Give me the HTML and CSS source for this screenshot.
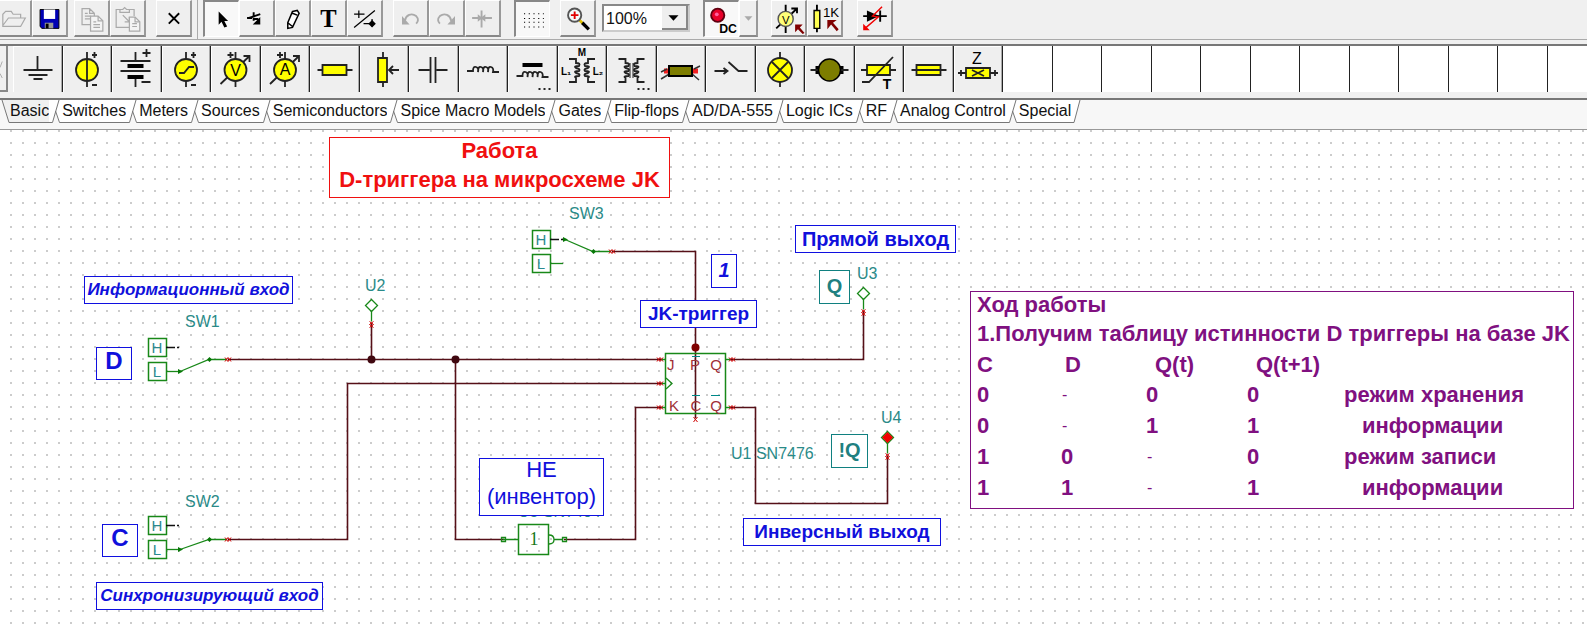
FILE: index.html
```
<!DOCTYPE html>
<html lang="ru">
<head>
<meta charset="utf-8">
<title>D-триггер на микросхеме JK</title>
<link rel="stylesheet" href="styles.css">
</head>
<body>
<header class="toolbar">
  <div class="group file">
    <button class="tool tool-cut" aria-label="Open"><svg viewBox="0 0 32 36"><path class="off" d="M3 26V14l3-3h6l2 3h8v4M3 26l6-8h18l-5 9H3z"/></svg></button>
    <button class="tool" aria-label="Save"><svg viewBox="0 0 34 36"><path fill="#0000b4" stroke="#000" d="M7 9h20v20H9l-2-2z"/><path fill="#fff" d="M11 9h12v10H11z"/><path fill="#999" d="M12 23h9v6h-9z"/><path fill="#000" d="M13 24h3v5h-3z"/></svg></button>
  </div>
  <div class="group">
    <button class="tool" aria-label="Copy"><svg viewBox="0 0 34 36"><path class="off" d="M7 8h8l5 5v12H7zM15 8v5h5M10 13h3M10 16h6M10 19h6"/><path class="off paper" d="M16 16h8l5 5v11H16z"/><path class="off" d="M24 16v5h5M19 22h3M19 25h7M19 28h7"/></svg></button>
    <button class="tool" aria-label="Paste"><svg viewBox="0 0 34 36"><path class="off" d="M9 9H5v19h14M19 9h5v7M9 12V9h3l2-2 2 2h3v3zM12 15l7 7M19 17v5h-5" /><path class="off paper" d="M19 17h6l5 5v10H19z"/><path class="off" d="M25 17v5h5M22 24h5M22 27h5"/></svg></button>
  </div>
  <div class="group">
    <button class="tool" aria-label="Delete"><svg viewBox="0 0 34 36"><path fill="none" stroke="#000" stroke-width="2" d="M12 13l11 11M23 13L12 24"/></svg></button>
  </div>
  <div class="divider"></div>
  <div class="group">
    <button class="tool pressed" aria-label="Select"><svg viewBox="0 0 34 36"><path fill="#000" d="M14 10v14l3-3 3 6 3-1-3-6h4z"/></svg></button>
    <button class="tool" aria-label="Wire node"><svg viewBox="0 0 34 36"><path fill="none" stroke="#000" stroke-width="2" d="M7 18h6M14 12v9M9 18l12-4M13 19h6M19 19v5"/><path d="M21 17v8h-8z"/></svg></button>
    <button class="tool" aria-label="Wire"><svg viewBox="0 0 34 36"><path fill="#fff" stroke="#000" stroke-width="1.6" d="M17 11l5-1 2 3-7 15-5 1 0-6zM12 23l5 4M17 13l5 2"/></svg></button>
    <button class="tool" aria-label="Text"><svg viewBox="0 0 34 36"><text class="glyph serif" x="17" y="27">T</text></svg></button>
    <button class="tool" aria-label="Components"><svg viewBox="0 0 34 36"><path fill="none" stroke="#000" stroke-width="1.3" d="M6 14h11M11 10v8M6 28L28 10M16 24h12M25 19v8"/><path d="M25 20l4 4-4 4-4-4z"/></svg></button>
  </div>
  <div class="group">
    <button class="tool" aria-label="Undo"><svg viewBox="0 0 34 36"><path class="off thick" d="M11 21c1-6 7-9 12-5 3 3 2 6 0 8"/><path fill="#aaa" d="M8 16v9h8z"/></svg></button>
    <button class="tool" aria-label="Redo"><svg viewBox="0 0 34 36"><path class="off thick" d="M22 21c-1-6-7-9-12-5-3 3-2 6 0 8"/><path fill="#aaa" d="M26 16v9h-8z"/></svg></button>
    <button class="tool" aria-label="Rotate"><svg viewBox="0 0 34 36"><path class="off thick" d="M6 18h21M16 10v18"/><path fill="#aaa" d="M12 14l5 4-5 4zM20 14l-5 4 5 4z"/></svg></button>
  </div>
  <div class="group wide">
    <button class="tool pressed" aria-label="Grid"><svg viewBox="0 0 34 36"><path fill="none" stroke="#000" stroke-width="1.2" stroke-dasharray="1.2 3.8" d="M8 12.500h21M8 17.500h21M8 21.500h21M8 26.500h21"/></svg></button>
  </div>
  <div class="group">
    <button class="tool" aria-label="Zoom"><svg viewBox="0 0 34 36"><path stroke="#e0c000" stroke-width="3" d="M19 20l4 4"/><path stroke="#000" stroke-width="3.500" d="M22 23l7 7"/><circle cx="14" cy="15" r="7" fill="#f4fafa" stroke="#555" stroke-width="2"/><path stroke="#e00000" stroke-width="2" d="M10 15h8M14 11v8"/></svg></button>
  </div>
  <label class="combo" aria-label="Zoom level">
    <select><option>100%</option></select>
    <span class="drop"><svg viewBox="0 0 24 24"><path d="M7 10h11l-5.500 6z"/></svg></span>
  </label>
  <div class="group wide">
    <button class="tool pressed" aria-label="DC mode"><svg viewBox="0 0 34 36"><circle cx="13" cy="14" r="7" fill="#e8002a" stroke="#600010" stroke-width="2"/><circle cx="12" cy="13" r="2" fill="#ff60a0"/><text class="glyph narrow" x="24" y="33">DC</text></svg></button>
    <button class="tool slim" aria-label="Mode list"><svg viewBox="0 0 18 36"><path fill="#aaa" d="M5 16h9l-4.500 5z"/></svg></button>
  </div>
  <div class="group wide">
    <button class="tool" aria-label="Voltage pin"><svg viewBox="0 0 34 36"><path fill="none" stroke="#000" stroke-width="2" d="M14 4v30M4 29L26 8M26 13V8h-6"/><circle cx="14" cy="19" r="8" fill="#ffff78" stroke="#555" stroke-width="1.500"/><text class="glyph tiny" x="14" y="24">V</text><path fill="#800000" d="M24 25h8l-3 3 5 6-2 1-5-5-3 3z"/></svg></button>
    <button class="tool" aria-label="Resistor value"><svg viewBox="0 0 34 36"><path stroke="#000" stroke-width="2" d="M9 4v29"/><path fill="#ffff50" stroke="#000" stroke-width="1.500" d="M6 10h6v19H6z"/><text class="glyph" x="24" y="17">1K</text><path fill="#800000" d="M20 20h10l-4 3 6 7-2 2-6-7-4 5z"/></svg></button>
  </div>
  <div class="group wider">
    <button class="tool" aria-label="Fault"><svg viewBox="0 0 34 36"><path stroke="#000" stroke-width="2" d="M5 16h25M23 10v12"/><path fill="#000" d="M9 10l13 6-13 6z"/><path fill="none" stroke="#f00000" stroke-width="1.500" d="M25 6l-10 10 6 1L7 29"/><path fill="#f00000" d="M5 24v7h7z"/></svg></button>
  </div>
</header>

<nav class="palette" aria-label="Components">
  <button class="scroller" aria-label="Scroll left"><svg viewBox="0 0 8 46"><path fill="none" stroke="#999" d="M0 22l3-8M0 30l3 6"/></svg></button>
  <button class="cell part" aria-label="Ground"><svg viewBox="0 0 48 46"><path class="ln" d="M24 10v14M10 24h29M15 29h19M20 33h9"/></svg></button>
  <button class="cell part" aria-label="Voltage source"><svg viewBox="0 0 48 46"><circle class="y" cx="24" cy="24" r="11"/><path class="ln" d="M24 6v35M29 9h5M31.500 6v6M29 39h5"/></svg></button>
  <button class="cell part" aria-label="Battery"><svg viewBox="0 0 48 46"><path class="ln" d="M23 6v8M8 15h30M8 25h30M23 32v9M30 7h8M34 3v8M29 36h9"/><path stroke="#000" stroke-width="4" d="M15 20h16M15 31h16"/></svg></button>
  <button class="cell part" aria-label="Generator"><svg viewBox="0 0 48 46"><path class="ln" d="M24 6v35M29 9h5M31.500 6v6M29 39h5"/><circle class="y" cx="24" cy="24" r="11"/><path class="ln" d="M17 27h5l5-6h5"/></svg></button>
  <button class="cell part" aria-label="Voltmeter"><svg viewBox="0 0 48 46"><path class="ln" d="M24 6v35M9 38L38 10M38 16v-6h-6M16 9h6M19 6v6"/><circle class="y" cx="24" cy="24" r="11"/><text class="glyph mid" x="24" y="30">V</text></svg></button>
  <button class="cell part" aria-label="Ammeter"><svg viewBox="0 0 48 46"><path class="ln" d="M24 6v35M9 38L38 10M38 16v-6h-6M16 9h6M19 6v6"/><circle class="y" cx="24" cy="24" r="11"/><text class="glyph mid" x="24" y="29">A</text></svg></button>
  <button class="cell part" aria-label="Resistor"><svg viewBox="0 0 48 46"><path class="ln" d="M7 24h35"/><path class="y" d="M12 19h24v10H12z"/></svg></button>
  <button class="cell part" aria-label="Potentiometer"><svg viewBox="0 0 48 46"><path class="ln" d="M23 6v35M29 24h10M33 20l-4 4 4 4"/><path class="y" d="M18 12h9v24h-9z"/></svg></button>
  <button class="cell part" aria-label="Capacitor"><svg viewBox="0 0 48 46"><path class="ln" d="M9 24h11M27 24h11M21 11v26M26 11v26"/></svg></button>
  <button class="cell part" aria-label="Inductor"><svg viewBox="0 0 48 46"><path class="ln" d="M8 25h6q0-5 3-4t2 5q0-6 3-5t2 5q0-6 3-5t2 5q0-6 3-5t2 5h6"/></svg></button>
  <button class="cell part" aria-label="Core inductor"><svg viewBox="0 0 48 46"><path stroke="#000" stroke-width="4" d="M14 19h20"/><path class="ln" d="M8 30h6q0-5 3-4t2 5q0-6 3-5t2 5q0-6 3-5t2 5q0-6 3-5t2 5h6"/><path class="dots" d="M30 43h12"/></svg></button>
  <button class="cell part" aria-label="Coupled inductors"><svg viewBox="0 0 48 46"><path class="ln" d="M11 13h7v4q5 0 3 3-6 0-3 2 5 1 3 3-6 0-3 2 5 1 3 3-6 0-3 2v4h-7M37 13h-7v4q-5 0-3 3 6 0 3 2-5 1-3 3 6 0 3 2-5 1-3 3 6 0 3 2v4h7"/><text class="glyph small" x="24" y="10">M</text><text class="glyph small" x="8" y="29">L₁</text><text class="glyph small" x="40" y="29">L₂</text></svg></button>
  <button class="cell part" aria-label="Transformer"><svg viewBox="0 0 48 46"><path class="ln" d="M11 13h7v4q5 0 3 3-6 0-3 2 5 1 3 3-6 0-3 2 5 1 3 3-6 0-3 2v4h-7M37 13h-7v4q-5 0-3 3 6 0 3 2-5 1-3 3 6 0 3 2-5 1-3 3 6 0 3 2v4h7"/><path fill="none" stroke="#222" d="M22.500 17v15M25.500 17v15"/><path class="dots" d="M30 43h12"/></svg></button>
  <button class="cell part" aria-label="Jumper"><svg viewBox="0 0 48 46"><path stroke="#f02020" stroke-width="5" d="M7 25h34"/><path fill="none" stroke="#333" stroke-width="1.500" d="M4 26l6-3M4 33l10-6M37 23l6-3M34 27l8 7"/><path fill="#7d7d00" stroke="#000" stroke-width="2" d="M12 20h23v10H12z"/></svg></button>
  <button class="cell part" aria-label="Switch"><svg viewBox="0 0 48 46"><path class="ln" d="M8 25h12M22 16l10 9h9M17 22l4 3-4 3"/></svg></button>
  <button class="cell part" aria-label="Bulb"><svg viewBox="0 0 48 46"><path class="ln" d="M24 6v35"/><circle class="y" cx="24" cy="24" r="12"/><path class="ln" d="M16 16l16 16M32 16L16 32"/></svg></button>
  <button class="cell part" aria-label="Motor"><svg viewBox="0 0 48 46"><path stroke="#000" stroke-width="8" d="M10 24h28"/><path class="ln" d="M5 24h38"/><circle cx="24" cy="24" r="11" fill="#7d7d00" stroke="#000" stroke-width="1.500"/></svg></button>
  <button class="cell part" aria-label="Thermistor"><svg viewBox="0 0 48 46"><path class="ln" d="M6 24h35"/><path class="y" d="M12 19h23v10H12z"/><path class="ln" d="M7 36h7L38 11"/><text class="glyph bold" x="32" y="43">T</text></svg></button>
  <button class="cell part" aria-label="Fuse"><svg viewBox="0 0 48 46"><path class="y" d="M12 19h24v10H12z"/><path class="ln" d="M7 24h35"/></svg></button>
  <button class="cell part" aria-label="Impedance"><svg viewBox="0 0 48 46"><path class="ln" d="M4 27h40M7 24v6M41 24v6"/><path class="y" d="M12 22h24v10H12z"/><path class="ln" d="M18 24l12 6M30 24l-12 6"/><text class="glyph mid" x="23" y="18">Z</text></svg></button>
  <span class="cell"></span><span class="cell"></span><span class="cell"></span><span class="cell"></span><span class="cell"></span><span class="cell"></span><span class="cell"></span><span class="cell"></span><span class="cell"></span><span class="cell"></span><span class="cell"></span><span class="cell"></span>
</nav>

<svg class="defs" aria-hidden="true">
  <symbol id="slash" viewBox="0 0 13 24"><path fill="#fff" d="M0 0h9L4 23H0zM6 12l4 11h3V0H9z"/><path fill="none" stroke="#777" d="M0 22.500h3.500L10 0M6.500 11l4 11.500H13"/></symbol>
</svg>
<nav class="tabs" aria-label="Component groups">
  <svg class="edge" viewBox="0 0 10 24"><path fill="#f0f0f0" d="M2 0l7 22h1V0z"/><path fill="none" stroke="#777" d="M2 0l7 22.500h1"/></svg>
  <button class="tab current">Basic</button><svg class="slash"><use href="#slash"/></svg>
  <button class="tab">Switches</button><svg class="slash"><use href="#slash"/></svg>
  <button class="tab">Meters</button><svg class="slash"><use href="#slash"/></svg>
  <button class="tab">Sources</button><svg class="slash"><use href="#slash"/></svg>
  <button class="tab">Semiconductors</button><svg class="slash"><use href="#slash"/></svg>
  <button class="tab">Spice Macro Models</button><svg class="slash"><use href="#slash"/></svg>
  <button class="tab">Gates</button><svg class="slash"><use href="#slash"/></svg>
  <button class="tab">Flip-flops</button><svg class="slash"><use href="#slash"/></svg>
  <button class="tab">AD/DA-555</button><svg class="slash"><use href="#slash"/></svg>
  <button class="tab">Logic ICs</button><svg class="slash"><use href="#slash"/></svg>
  <button class="tab">RF</button><svg class="slash"><use href="#slash"/></svg>
  <button class="tab">Analog Control</button><svg class="slash"><use href="#slash"/></svg>
  <button class="tab">Special</button>
  <svg class="edge" viewBox="0 0 10 24"><path fill="#fff" d="M0 0h9L3 22H0z"/><path fill="none" stroke="#777" d="M9 0L3 22.500H0"/></svg>
</nav>

<main class="sheet">
  <svg class="circuit" viewBox="0 130 1587 495">
    <defs>
      <g id="levels"><path class="g2" d="M1.500 1.500h18v18h-18zM1.500 25.500h18v18h-18z"/><path class="g" d="M19 34.500h13"/><path class="k" d="M19 10.500h13"/><text class="lv" x="10" y="16">H</text><text class="lv" x="10" y="40">L</text></g>
      <path id="pin" d="M-3-2l3 4M-3 2l3-4M0-2l3 4M0 2l3-4"/>
      <g id="probe"><path class="g" d="M0-6l6 6-6 6-6-6z"/><path class="g" d="M0 6v10"/><path class="r" d="M-2 16l4 3M2 16l-4 3M-2 19l4 3M2 19l-4 3"/></g>
    </defs>
    <g class="wire">
      <path d="M228 359.500h434M371.500 323v36M455.500 359v180.500H503M564 539.500h71.500v-132H662M228 539.500h119.500v-156H662M612 251.500h83.500V418M730 359.500h133.500V311M730 407.500h25.500v96h132V456"/>
    </g>
    <circle class="node" cx="371.500" cy="359.500" r="4"/>
    <circle class="node" cx="455.500" cy="359.500" r="4"/>
    <circle cx="695.500" cy="347.500" r="4" fill="#800000"/>

    <use href="#levels" x="147" y="337"/><use href="#levels" x="147" y="515"/><use href="#levels" x="531" y="229"/>
    <path class="g" d="M180 371.500l29-12h18M180 549.500l29-10h18M565 239.500l28 12h18"/>
    <path fill="#087808" d="M178 369l5 2.500-5 2.500zM178 547l5 2.500-5 2.500zM563 237l5 2.500-5 2.500zM207 359.500l2.500-2.500 2.500 2.500-2.500 2.500zM207 539.500l2.500-2.500 2.500 2.500-2.500 2.500zM591 251.500l2.500-2.500 2.500 2.500-2.500 2.500z"/>
    <g class="r">
      <use href="#pin" x="228" y="359.500"/><use href="#pin" x="228" y="539.500"/><use href="#pin" x="612" y="251.500"/>
      <use href="#pin" x="660" y="359.500"/><use href="#pin" x="660" y="383.500"/><use href="#pin" x="660" y="407.500"/>
      <use href="#pin" x="732" y="359.500"/><use href="#pin" x="732" y="407.500"/><path d="M693.500 417l4 5M697.500 417l-4 5"/>
    </g>

    <path class="g2" d="M665.500 353.500h60v60h-60z"/>
    <path class="g" d="M662 359.500h4M662 383.500h4M662 407.500h4M726 359.500h4M726 407.500h4M666 378l6 5.500-6 5.500"/>
    <g class="port"><text x="667" y="370">J</text><text x="695" y="370" text-anchor="middle">P</text><text x="716" y="370" text-anchor="middle">Q</text><text x="674" y="411" text-anchor="middle">K</text><text x="696" y="411" text-anchor="middle">C</text><text x="716" y="411" text-anchor="middle">Q</text></g>
    <path stroke="#088" d="M692 356.500h8M692 395.500h8M711 395.500h9"/>

    <path class="g2" d="M518.500 524.500h30v30h-30z"/>
    <path class="g" d="M503 539.500h15M549 535q5 0 5 4.500t-5 4.500M554 539.500h9M501.500 537.500h4v4h-4zM562.500 537.500h4v4h-4z"/>
    <text class="one" x="534" y="545">1</text>

    <use href="#probe" x="371.500" y="305.500"/><use href="#probe" x="863.500" y="293.500"/><use href="#probe" x="887.500" y="437.500"/>
    <path fill="#f00000" d="M887.500 432l5.500 5.500-5.500 5.500-5.500-5.500z"/>

    <g class="ref">
      <text x="185" y="327">SW1</text><text x="185" y="507">SW2</text><text x="569" y="219">SW3</text>
      <text x="365" y="291">U2</text><text x="857" y="279">U3</text><text x="881" y="423">U4</text>
      <text x="731" y="459">U1 SN7476</text><text x="518" y="517">U5 SN7404</text>
    </g>
  </svg>

  <h1 class="note title"><span>Работа</span><span>D-триггера на микросхеме JK</span></h1>
  <div class="note slant info">Информационный вход</div>
  <div class="note slant sync">Синхронизирующий вход</div>
  <div class="note letter in-d">D</div>
  <div class="note letter in-c">C</div>
  <div class="note mark one-mark">1</div>
  <div class="note head jk">JK-триггер</div>
  <div class="note head direct">Прямой выход</div>
  <div class="note head inverse">Инверсный выход</div>
  <div class="note mark teal out-q">Q</div>
  <div class="note mark teal out-nq">!Q</div>
  <div class="note inverter"><span>НЕ</span><span>(инвентор)</span></div>

  <section class="note work">
    <p class="lead">Ход работы</p>
    <p>1.Получим таблицу истинности D триггеры на базе JK</p>
    <table>
      <thead><tr><th>C</th><th>D</th><th>Q(t)</th><th>Q(t+1)</th><th></th></tr></thead>
      <tbody>
        <tr><td>0</td><td class="dash">-</td><td>0</td><td>0</td><td>режим хранения</td></tr>
        <tr><td>0</td><td class="dash">-</td><td>1</td><td>1</td><td class="more">информации</td></tr>
        <tr><td>1</td><td>0</td><td class="dash">-</td><td>0</td><td>режим записи</td></tr>
        <tr><td>1</td><td>1</td><td class="dash">-</td><td>1</td><td class="more">информации</td></tr>
      </tbody>
    </table>
  </section>
</main>
</body>
</html>
```
FILE: styles.css
```
* { box-sizing: border-box; }
body {
  margin: 0;
  min-height: 100vh;
  display: flex;
  flex-direction: column;
  overflow: hidden;
  background: #f0f0f0;
  font-family: "Liberation Sans", Arial, sans-serif;
}
button { padding: 0; font: inherit; color: inherit; }
svg { display: block; }
.defs { position: absolute; width: 0; height: 0; }

/* top toolbar */
.toolbar {
  display: flex;
  align-items: flex-start;
  gap: 10px;
  height: 40px;
  border-bottom: 1px solid #aaa;
}
.group { display: flex; }
.group.file { margin-right: -4px; }
.group.wide { margin-left: 3px; }
.group.wider { margin-left: 4px; }
.tool {
  width: 36px;
  height: 37px;
  border: 1px solid #fff;
  border-right: 2px solid #999;
  border-bottom: 2px solid #888;
  background: #efefef;
}
.tool-cut { width: 32px; border-left: 0; }
.tool.slim { width: 19px; }
.tool.pressed {
  border: 1px solid #fff;
  border-left: 2px solid #888;
  border-top: 2px solid #888;
  background: #f8f8f8;
}
.tool svg { width: 100%; height: 34px; }
.divider { width: 1px; height: 39px; margin: 0 -5px; background: #aaa; }
.off { fill: none; stroke: #aaa; stroke-width: 1.3; }
.off.thick { stroke-width: 2; }
.off.paper { fill: #f4f4f4; }
.glyph { font-size: 14px; text-anchor: middle; fill: #000; }
.glyph.serif { font: bold 26px "Liberation Serif", serif; }
.glyph.narrow { font-size: 13px; font-weight: bold; }
.glyph.tiny { font-size: 12px; }
.glyph.mid { font-size: 16px; }
.glyph.small { font-size: 10px; font-weight: bold; }
.glyph.bold { font-weight: bold; }

.combo {
  display: flex;
  width: 88px;
  height: 28px;
  margin: 4px 0 0 -4px;
  border: 2px solid #888;
  border-right-color: #ccc;
  border-bottom-color: #ccc;
  background: #fff;
}
.combo select {
  flex: 1;
  min-width: 0;
  padding: 0 2px;
  border: 0;
  appearance: none;
  background: #fff;
  font: 16px "Liberation Sans", Arial, sans-serif;
  color: #111;
}
.drop {
  width: 26px;
  border-right: 2px solid #888;
  border-bottom: 2px solid #888;
  background: #efefef;
}
.drop svg { height: 22px; }

/* component palette */
.palette {
  display: flex;
  height: 56px;
  margin-top: 4px;
  border-top: 2px solid #777;
  border-bottom: 2px solid #777;
  padding-bottom: 6px;
  overflow: hidden;
}
.scroller {
  flex: none;
  width: 8px;
  margin-right: 5px;
  border: 0;
  border-right: 2px solid #888;
  border-bottom: 2px solid #888;
  background: #f0f0f0;
}
.cell {
  flex: none;
  width: 49px;
  border: 0;
  border-right: 1px solid #222;
  background: #fff;
}
.cell:nth-child(even) { width: 50px; }
.cell.part {
  background: #efefef;
  box-shadow: inset -1px 0 #aaa, inset 1px 1px #fff;
}
.cell svg { width: 100%; height: 46px; }
.ln { fill: none; stroke: #222; stroke-width: 1.8; }
.y { fill: #ff0; stroke: #222; stroke-width: 1.8; }
.dots { stroke: #222; stroke-width: 2; stroke-dasharray: 2 3; }

/* category tabs */
.tabs {
  display: flex;
  height: 30px;
  background: #f7f7f7;
  border-bottom: 1px solid #999;
}
.edge { flex: none; width: 10px; height: 24px; }
.slash { flex: none; width: 13px; height: 24px; }
.tab {
  height: 23px;
  padding: 0;
  border: 0;
  border-bottom: 1px solid #777;
  background: #fff;
  font-size: 16px;
  line-height: 22px;
  white-space: nowrap;
  color: #111;
}
.tab.current { background: #f0f0f0; }

/* schematic sheet */
.sheet {
  position: relative;
  flex: 1;
  background: #fff radial-gradient(circle, #ccc 1px, transparent 1px) 5px 7px / 12px 12px;
}
.circuit { position: absolute; left: 0; top: 0; width: 1587px; height: 495px; }
.wire { fill: none; stroke: #561018; stroke-width: 1.6; }
.node { fill: #400810; }
.g { fill: none; stroke: #188818; stroke-width: 1.3; }
.g2 { fill: none; stroke: #188818; stroke-width: 1.5; }
.k { stroke: #111; stroke-width: 1.6; stroke-dasharray: 9 2; }
.r { fill: none; stroke: #d00000; stroke-width: 1; }
.lv { font-size: 15px; text-anchor: middle; fill: #2a8a90; }
.port { font-size: 15px; fill: #a03038; }
.one { font: 18px "Liberation Serif", serif; text-anchor: middle; fill: #187818; }
.ref { font-size: 16px; fill: #2a8a88; }

.note {
  position: absolute;
  margin: 0;
  padding-top: 1px;
  border: 1px solid #1010e0;
  background: #fff;
  color: #1010dc;
  font-size: 18px;
  font-weight: bold;
  line-height: 24px;
  text-align: center;
  white-space: nowrap;
}
.note span { display: block; }
.title { left: 329px; top: 7px; width: 341px; height: 61px; border-color: #f01010; color: #f01010; font-size: 22px; }
.title span + span { line-height: 34px; }
.slant { height: 28px; font-size: 17px; font-style: italic; }
.info { left: 84px; top: 146px; width: 209px; }
.sync { left: 96px; top: 452px; width: 227px; }
.letter { width: 36px; height: 33px; font-size: 24px; }
.in-d { left: 96px; top: 217px; }
.in-c { left: 102px; top: 394px; }
.mark { height: 34px; font-size: 20px; line-height: 28px; }
.one-mark { left: 711px; top: 124px; width: 26px; font-style: italic; }
.teal { border-color: #108080; color: #208080; }
.out-q { left: 819px; top: 140px; width: 31px; }
.out-nq { left: 831px; top: 304px; width: 37px; }
.head { height: 28px; font-size: 19px; }
.jk { left: 640px; top: 170px; width: 117px; }
.direct { left: 795px; top: 95px; width: 161px; font-size: 20px; }
.inverse { left: 743px; top: 388px; width: 198px; }
.inverter { left: 479px; top: 328px; width: 125px; height: 58px; font-size: 22px; font-weight: normal; line-height: 20px; }
.inverter span + span { line-height: 34px; }

.work {
  left: 970px;
  top: 161px;
  width: 604px;
  height: 218px;
  padding: 1px 6px 0;
  border-color: #801080;
  color: #801080;
  font-size: 22px;
  line-height: 28px;
  text-align: left;
}
.work p { margin: 0; line-height: 34px; }
.work .lead { line-height: 24px; }
.work table { table-layout: fixed; width: 100%; border-collapse: collapse; }
.work th, .work td { padding: 0; text-align: left; }
.work th { height: 28px; }
.work td { height: 31px; }
.work th:nth-child(1) { width: 84px; }
.work th:nth-child(2) { width: 85px; padding-left: 4px; }
.work th:nth-child(3) { width: 101px; padding-left: 9px; }
.work th:nth-child(4) { width: 97px; padding-left: 9px; }
.work .dash { font-size: 16px; font-weight: normal; padding-left: 1px; }
.work .more { padding-left: 18px; }
```
